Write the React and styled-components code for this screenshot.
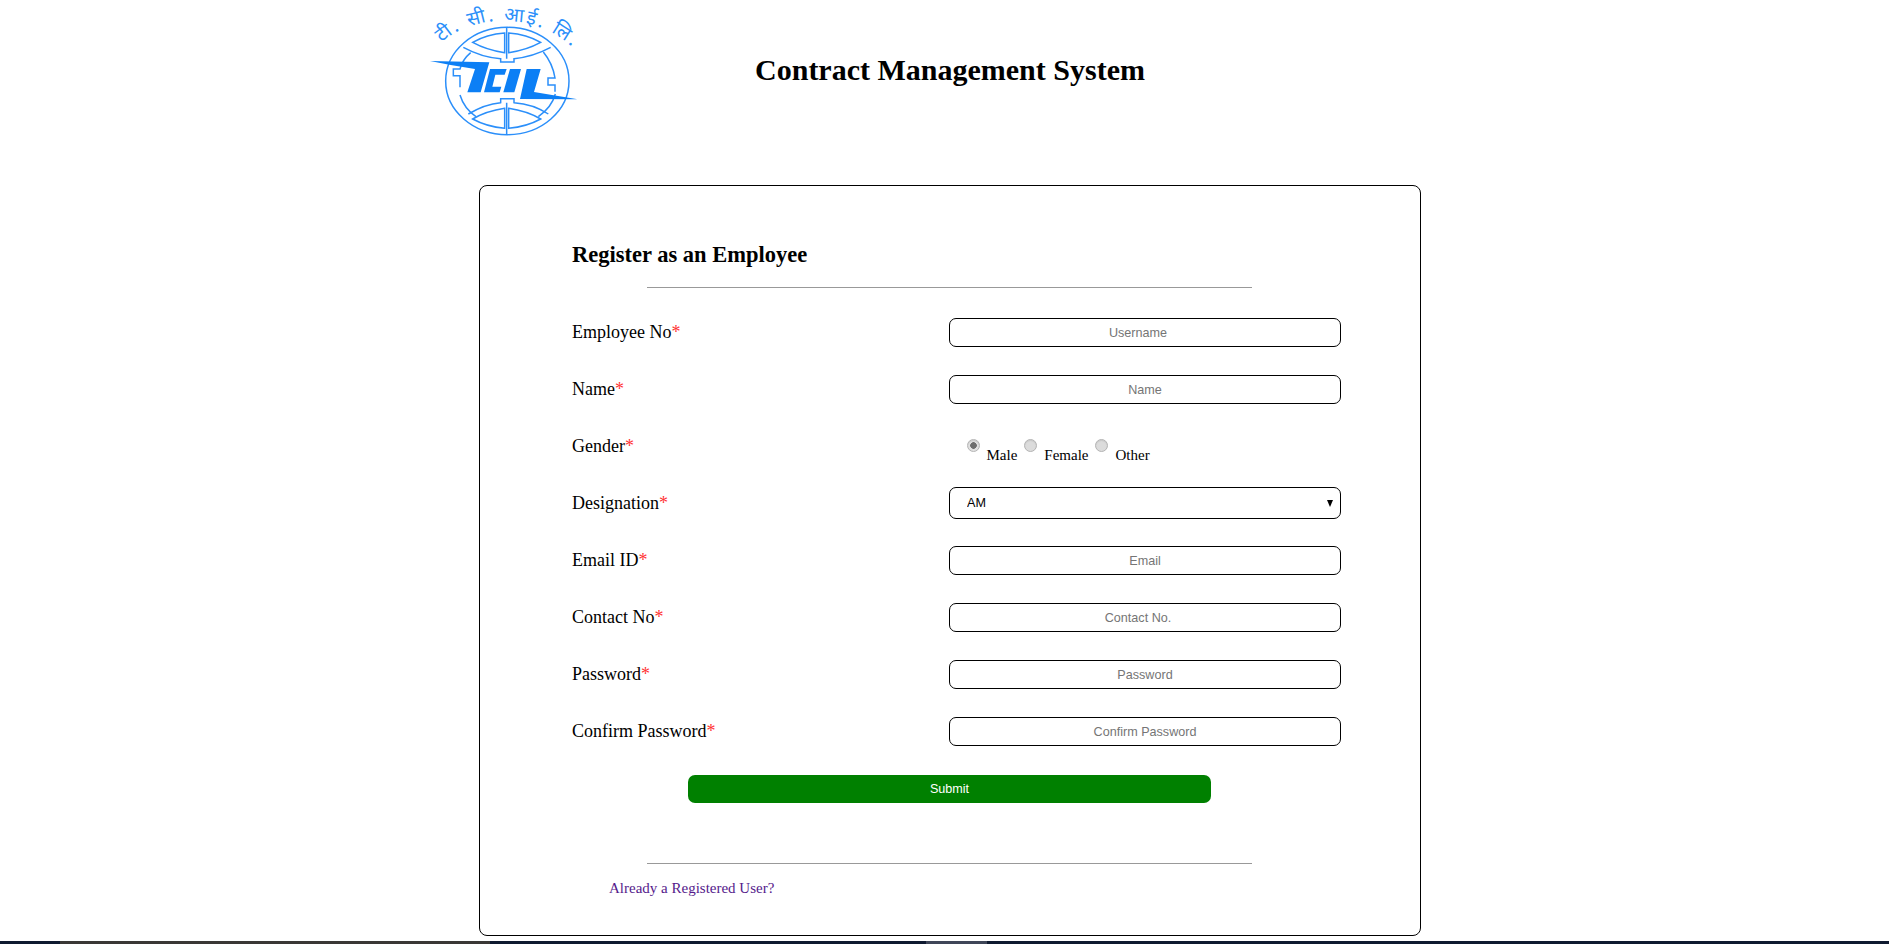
import React from "react";
import styled, { createGlobalStyle } from "styled-components";

const Global = createGlobalStyle`
  html, body { margin: 0; padding: 0; background: #fff; overflow: hidden; }
  body { font-family: "Liberation Serif", "Times New Roman", serif; color: #000; }
`;

const Page = styled.div`
  height: 944px;
  display: flex;
  flex-direction: column;
  overflow: hidden;
`;

const Main = styled.div`
  flex: 1;
  padding-left: 11px;
`;

const Header = styled.header`
  width: 1080px;
  height: 150px;
  margin: 0 auto 35px;
  display: grid;
  grid-template-columns: 200px 1fr 200px;
  align-items: center;
`;

const LogoSvg = styled.svg`
  display: block;
  width: 200px;
  height: 150px;
`;

const Title = styled.h1`
  margin: 0 0 10px;
  text-align: center;
  font-size: 30px;
  line-height: 40px;
  font-weight: bold;
`;

const Card = styled.main`
  box-sizing: border-box;
  width: 942px;
  height: 751px;
  margin: 0 auto;
  padding: 56px 80px 0 92px;
  border: 1px solid #000;
  border-radius: 8px;
`;

const Heading = styled.h3`
  margin: 0;
  font-size: 22.5px;
  line-height: 26px;
  font-weight: bold;
`;

const Rule = styled.hr`
  width: 605px;
  height: 1px;
  margin: ${(p) => p.$top}px 0 0 75px;
  border: 0;
  background: #999;
`;

const Fields = styled.div`
  margin-top: 16px;
`;

const Row = styled.div`
  display: grid;
  grid-template-columns: 377px 392px;
  height: 57px;
  align-items: center;
`;

const Label = styled.label`
  font-size: 18px;
  line-height: 22px;
  margin-top: -2px;
`;

const Star = styled.span`
  color: #f33;
`;

const TextInput = styled.input`
  box-sizing: border-box;
  width: 392px;
  height: 29px;
  padding: 0 ${(p) => (p.$shift ? 14 : 0)}px 0 0;
  border: 1px solid #000;
  border-radius: 7px;
  background: #fff;
  text-align: center;
  font: 12.6px "Liberation Sans", Arial, sans-serif;
  &::placeholder { color: #757575; opacity: 1; }
`;

const SelectWrap = styled.div`
  position: relative;
  width: 392px;
  height: 32px;
  margin-top: -1px;
  &::after {
    content: "";
    position: absolute;
    right: 8px;
    top: 13px;
    border-left: 3.5px solid transparent;
    border-right: 3.5px solid transparent;
    border-top: 7px solid #000;
    pointer-events: none;
  }
`;

const Select = styled.select`
  appearance: none;
  box-sizing: border-box;
  width: 100%;
  height: 100%;
  padding: 0 0 0 17px;
  border: 1px solid #000;
  border-radius: 7px;
  background: #fff;
  color: #000;
  font: 12.6px "Liberation Sans", Arial, sans-serif;
`;

const RadioGroup = styled.div`
  display: flex;
  align-items: flex-start;
  margin-top: 9px;
  padding-left: 17.5px;
  gap: 7px;
`;

const RadioOption = styled.label`
  display: flex;
  align-items: flex-start;
  gap: 7px;
`;

const Radio = styled.input.attrs({ type: "radio" })`
  appearance: none;
  width: 13px;
  height: 13px;
  margin: 0;
  border: 1px solid #b4b4b4;
  border-radius: 50%;
  background: #dcdcdc;
  box-shadow: inset 0 1px 1px #c8c8c8;
  &:checked {
    background: radial-gradient(circle, #6f6f6f 0 3px, #e2e2e2 3.6px);
  }
`;

const RadioText = styled.span`
  margin-top: 7px;
  font-size: 15px;
  line-height: 18px;
`;

const Submit = styled.button`
  display: block;
  width: 523px;
  height: 28px;
  margin: 15px 0 0 116px;
  padding: 0;
  border: 0;
  border-radius: 7px;
  background: #008000;
  color: #fff;
  font: 12.6px "Liberation Sans", Arial, sans-serif;
`;

const Login = styled.a`
  display: block;
  width: max-content;
  margin: 14px 0 0 37px;
  color: #551a8b;
  font-size: 15px;
  line-height: 20px;
  text-decoration: none;
`;

const TaskStrip = styled.div`
  display: flex;
  height: 3px;
  flex: none;
  background: #0f1a30;
`;

const TaskSlot = styled.div`
  width: ${(p) => p.$w}px;
  background: ${(p) => p.$c};
`;

const BLUE = "#2b8ffa";

function Logo() {
  return (
    <LogoSvg viewBox="0 0 600 450" aria-label="TCIL logo">
      <defs>
        <path id="logoArc" d="M95 128 C170 55 350 25 480 135" />
      </defs>
      <text fontSize="58" fill={BLUE} fontFamily="'Noto Sans', 'Noto Sans Devanagari', sans-serif">
        <textPath href="#logoArc" textLength="425" lengthAdjust="spacing">टी. सी. आई. लि.</textPath>
      </text>
      <g fill="none" stroke={BLUE} strokeWidth="4.5">
        <ellipse cx="292" cy="243" rx="185" ry="161" />
        <path d="M188 127 Q230 103 284 99 V158 Q230 150 188 127 Z" />
        <path d="M392 127 Q350 103 296 99 V158 Q350 150 392 127 Z" />
        <path d="M188 357 Q230 333 284 325 V385 Q230 380 188 357 Z" />
        <path d="M392 357 Q350 333 296 325 V385 Q350 380 392 357 Z" />
        <path d="M160 142 Q215 172 272 176 V186 H312 V176 Q370 170 422 142" />
        <path d="M175 342 Q225 312 272 308 V296 H312 V308 Q370 312 415 342" />
        <path d="M290 84 V176 M290 308 V403" />
        <path d="M182 158 Q158 178 150 207 H130 V227 H150 V262 M150 285 Q162 325 198 350" />
        <path d="M400 156 Q428 190 435 234 H414 V255 H435 V275 M436 282 Q425 322 385 350" />
      </g>
      <g fill="#0c7ff5">
        <polygon points="60,183 238,187 212,277 172,277 195,207 122,195" />
        <polygon points="240,207 290,207 284,224 256,224 247,260 274,260 269,277 222,277" />
        <polygon points="300,207 333,207 313,277 280,277" />
        <polygon points="350,207 392,207 372,276 503,298 330,297" />
      </g>
    </LogoSvg>
  );
}

const req = <Star>*</Star>;

export default function App() {
  return (
    <Page>
      <Global />
      <Main>
        <Header>
          <Logo />
          <Title>Contract Management System</Title>
        </Header>
        <Card>
          <Heading>Register as an Employee</Heading>
          <Rule $top={19} />
          <Fields>
            <Row>
              <Label>Employee No{req}</Label>
              <TextInput $shift placeholder="Username" />
            </Row>
            <Row>
              <Label>Name{req}</Label>
              <TextInput placeholder="Name" />
            </Row>
            <Row>
              <Label>Gender{req}</Label>
              <RadioGroup>
                <RadioOption><Radio name="gender" defaultChecked /><RadioText>Male</RadioText></RadioOption>
                <RadioOption><Radio name="gender" /><RadioText>Female</RadioText></RadioOption>
                <RadioOption><Radio name="gender" /><RadioText>Other</RadioText></RadioOption>
              </RadioGroup>
            </Row>
            <Row>
              <Label>Designation{req}</Label>
              <SelectWrap>
                <Select defaultValue="AM"><option>AM</option></Select>
              </SelectWrap>
            </Row>
            <Row>
              <Label>Email ID{req}</Label>
              <TextInput placeholder="Email" />
            </Row>
            <Row>
              <Label>Contact No{req}</Label>
              <TextInput $shift placeholder="Contact No." />
            </Row>
            <Row>
              <Label>Password{req}</Label>
              <TextInput placeholder="Password" />
            </Row>
            <Row>
              <Label>Confirm Password{req}</Label>
              <TextInput placeholder="Confirm Password" />
            </Row>
          </Fields>
          <Submit>Submit</Submit>
          <Rule $top={60} />
          <Login href="#">Already a Registered User?</Login>
        </Card>
      </Main>
      <TaskStrip>
        <TaskSlot $w={60} $c="#0f1a30" />
        <TaskSlot $w={430} $c="#3a3835" />
        <TaskSlot $w={436} $c="#0f1a30" />
        <TaskSlot $w={61} $c="#3f4658" />
      </TaskStrip>
    </Page>
  );
}
